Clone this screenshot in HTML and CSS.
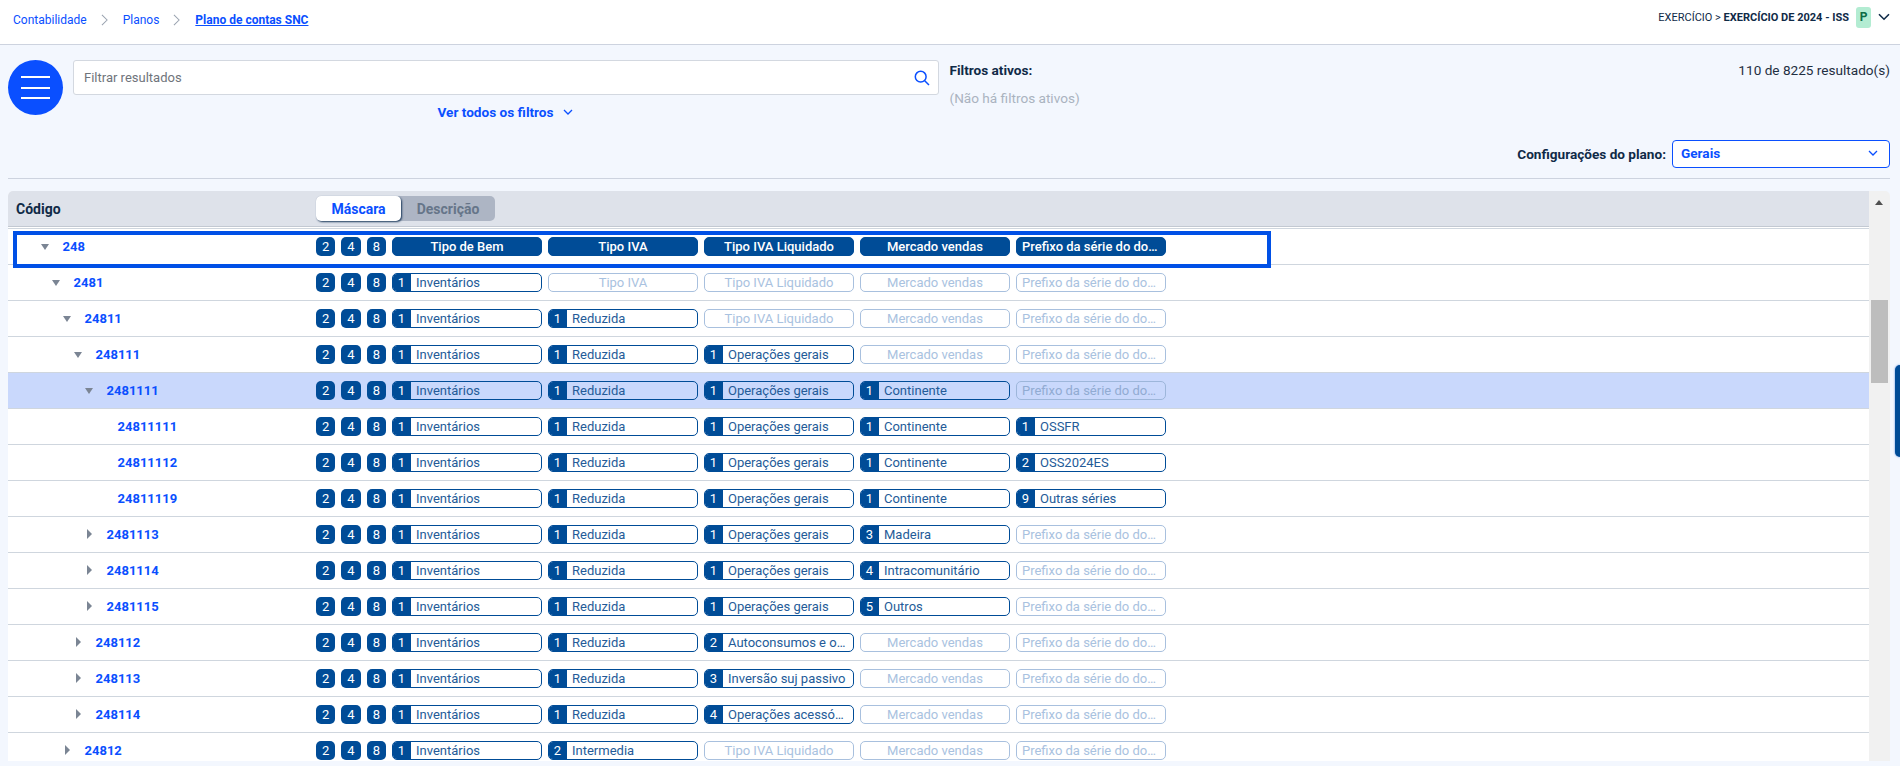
FILE: index.html
```html
<!DOCTYPE html>
<html lang="pt">
<head>
<meta charset="utf-8">
<title>Plano de contas SNC</title>
<link rel="stylesheet" href="styles.css">
</head>
<body>
<header class="topbar">
  <nav class="crumbs">
    <a class="crumb">Contabilidade</a>
    <svg class="crumb-sep" viewBox="0 0 8 14"><path d="M1 1l6 6-6 6"/></svg>
    <a class="crumb">Planos</a>
    <svg class="crumb-sep" viewBox="0 0 8 14"><path d="M1 1l6 6-6 6"/></svg>
    <a class="crumb current">Plano de contas SNC</a>
  </nav>
  <div class="exercise">
    <span>EXERCÍCIO &gt; <b>EXERCÍCIO DE 2024 - ISS</b></span>
    <span class="chip">P</span>
    <svg class="top-chev" viewBox="0 0 12 8"><path d="M1 1.2l5 5 5-5"/></svg>
  </div>
</header>

<section class="filters">
  <button class="menu"><i></i><i></i><i></i></button>
  <div class="search-col">
    <div class="search">
      <span class="placeholder">Filtrar resultados</span>
      <svg class="search-icon" viewBox="0 0 16 16"><circle cx="6.7" cy="6.7" r="5.4"/><path d="M10.7 10.7l4.3 4.3"/></svg>
    </div>
    <a class="see-all">Ver todos os filtros
      <svg class="see-chev" viewBox="0 0 10 6"><path d="M1 1l4 4 4-4"/></svg>
    </a>
  </div>
  <div class="active">
    <div class="active-title">Filtros ativos:</div>
    <div class="active-none">(Não há filtros ativos)</div>
  </div>
  <div class="results">110 de 8225 resultado(s)</div>
</section>

<section class="config">
  <label class="config-label">Configurações do plano:</label>
  <div class="select">Gerais
    <svg class="select-chev" viewBox="0 0 10 6"><path d="M1 1l4 4 4-4"/></svg>
  </div>
</section>

<main class="table">
  <div class="table-main">
    <div class="thead">
      <div class="code-cell head-code">Código</div>
      <div class="toggle"><span class="tog on">Máscara</span><span class="tog off">Descrição</span></div>
    </div>
    <div class="tbody">
      <div class="row">
        <div class="code-cell l0"><span class="tw open"></span><a class="code">248</a></div>
        <div class="mask">
          <span class="bit">2</span><span class="bit">4</span><span class="bit">8</span>
          <span class="field head">Tipo de Bem</span><span class="field head">Tipo IVA</span><span class="field head">Tipo IVA Liquidado</span><span class="field head">Mercado vendas</span><span class="field head long">Prefixo da série do do…</span>
        </div>
      </div>
      <div class="row">
        <div class="code-cell l1"><span class="tw open"></span><a class="code">2481</a></div>
        <div class="mask">
          <span class="bit">2</span><span class="bit">4</span><span class="bit">8</span>
          <span class="field"><b>1</b><em>Inventários</em></span><span class="field ph">Tipo IVA</span><span class="field ph">Tipo IVA Liquidado</span><span class="field ph">Mercado vendas</span><span class="field ph long">Prefixo da série do do…</span>
        </div>
      </div>
      <div class="row">
        <div class="code-cell l2"><span class="tw open"></span><a class="code">24811</a></div>
        <div class="mask">
          <span class="bit">2</span><span class="bit">4</span><span class="bit">8</span>
          <span class="field"><b>1</b><em>Inventários</em></span><span class="field"><b>1</b><em>Reduzida</em></span><span class="field ph">Tipo IVA Liquidado</span><span class="field ph">Mercado vendas</span><span class="field ph long">Prefixo da série do do…</span>
        </div>
      </div>
      <div class="row">
        <div class="code-cell l3"><span class="tw open"></span><a class="code">248111</a></div>
        <div class="mask">
          <span class="bit">2</span><span class="bit">4</span><span class="bit">8</span>
          <span class="field"><b>1</b><em>Inventários</em></span><span class="field"><b>1</b><em>Reduzida</em></span><span class="field"><b>1</b><em>Operações gerais</em></span><span class="field ph">Mercado vendas</span><span class="field ph long">Prefixo da série do do…</span>
        </div>
      </div>
      <div class="row selected">
        <div class="code-cell l4"><span class="tw open"></span><a class="code">2481111</a></div>
        <div class="mask">
          <span class="bit">2</span><span class="bit">4</span><span class="bit">8</span>
          <span class="field"><b>1</b><em>Inventários</em></span><span class="field"><b>1</b><em>Reduzida</em></span><span class="field"><b>1</b><em>Operações gerais</em></span><span class="field"><b>1</b><em>Continente</em></span><span class="field ph long">Prefixo da série do do…</span>
        </div>
      </div>
      <div class="row">
        <div class="code-cell l5"><span class="tw"></span><a class="code">24811111</a></div>
        <div class="mask">
          <span class="bit">2</span><span class="bit">4</span><span class="bit">8</span>
          <span class="field"><b>1</b><em>Inventários</em></span><span class="field"><b>1</b><em>Reduzida</em></span><span class="field"><b>1</b><em>Operações gerais</em></span><span class="field"><b>1</b><em>Continente</em></span><span class="field"><b>1</b><em>OSSFR</em></span>
        </div>
      </div>
      <div class="row">
        <div class="code-cell l5"><span class="tw"></span><a class="code">24811112</a></div>
        <div class="mask">
          <span class="bit">2</span><span class="bit">4</span><span class="bit">8</span>
          <span class="field"><b>1</b><em>Inventários</em></span><span class="field"><b>1</b><em>Reduzida</em></span><span class="field"><b>1</b><em>Operações gerais</em></span><span class="field"><b>1</b><em>Continente</em></span><span class="field"><b>2</b><em>OSS2024ES</em></span>
        </div>
      </div>
      <div class="row">
        <div class="code-cell l5"><span class="tw"></span><a class="code">24811119</a></div>
        <div class="mask">
          <span class="bit">2</span><span class="bit">4</span><span class="bit">8</span>
          <span class="field"><b>1</b><em>Inventários</em></span><span class="field"><b>1</b><em>Reduzida</em></span><span class="field"><b>1</b><em>Operações gerais</em></span><span class="field"><b>1</b><em>Continente</em></span><span class="field"><b>9</b><em>Outras séries</em></span>
        </div>
      </div>
      <div class="row">
        <div class="code-cell l4"><span class="tw closed"></span><a class="code">2481113</a></div>
        <div class="mask">
          <span class="bit">2</span><span class="bit">4</span><span class="bit">8</span>
          <span class="field"><b>1</b><em>Inventários</em></span><span class="field"><b>1</b><em>Reduzida</em></span><span class="field"><b>1</b><em>Operações gerais</em></span><span class="field"><b>3</b><em>Madeira</em></span><span class="field ph long">Prefixo da série do do…</span>
        </div>
      </div>
      <div class="row">
        <div class="code-cell l4"><span class="tw closed"></span><a class="code">2481114</a></div>
        <div class="mask">
          <span class="bit">2</span><span class="bit">4</span><span class="bit">8</span>
          <span class="field"><b>1</b><em>Inventários</em></span><span class="field"><b>1</b><em>Reduzida</em></span><span class="field"><b>1</b><em>Operações gerais</em></span><span class="field"><b>4</b><em>Intracomunitário</em></span><span class="field ph long">Prefixo da série do do…</span>
        </div>
      </div>
      <div class="row">
        <div class="code-cell l4"><span class="tw closed"></span><a class="code">2481115</a></div>
        <div class="mask">
          <span class="bit">2</span><span class="bit">4</span><span class="bit">8</span>
          <span class="field"><b>1</b><em>Inventários</em></span><span class="field"><b>1</b><em>Reduzida</em></span><span class="field"><b>1</b><em>Operações gerais</em></span><span class="field"><b>5</b><em>Outros</em></span><span class="field ph long">Prefixo da série do do…</span>
        </div>
      </div>
      <div class="row">
        <div class="code-cell l3"><span class="tw closed"></span><a class="code">248112</a></div>
        <div class="mask">
          <span class="bit">2</span><span class="bit">4</span><span class="bit">8</span>
          <span class="field"><b>1</b><em>Inventários</em></span><span class="field"><b>1</b><em>Reduzida</em></span><span class="field"><b>2</b><em>Autoconsumos e o…</em></span><span class="field ph">Mercado vendas</span><span class="field ph long">Prefixo da série do do…</span>
        </div>
      </div>
      <div class="row">
        <div class="code-cell l3"><span class="tw closed"></span><a class="code">248113</a></div>
        <div class="mask">
          <span class="bit">2</span><span class="bit">4</span><span class="bit">8</span>
          <span class="field"><b>1</b><em>Inventários</em></span><span class="field"><b>1</b><em>Reduzida</em></span><span class="field"><b>3</b><em>Inversão suj passivo</em></span><span class="field ph">Mercado vendas</span><span class="field ph long">Prefixo da série do do…</span>
        </div>
      </div>
      <div class="row">
        <div class="code-cell l3"><span class="tw closed"></span><a class="code">248114</a></div>
        <div class="mask">
          <span class="bit">2</span><span class="bit">4</span><span class="bit">8</span>
          <span class="field"><b>1</b><em>Inventários</em></span><span class="field"><b>1</b><em>Reduzida</em></span><span class="field"><b>4</b><em>Operações acessó…</em></span><span class="field ph">Mercado vendas</span><span class="field ph long">Prefixo da série do do…</span>
        </div>
      </div>
      <div class="row">
        <div class="code-cell l2"><span class="tw closed"></span><a class="code">24812</a></div>
        <div class="mask">
          <span class="bit">2</span><span class="bit">4</span><span class="bit">8</span>
          <span class="field"><b>1</b><em>Inventários</em></span><span class="field"><b>2</b><em>Intermedia</em></span><span class="field ph">Tipo IVA Liquidado</span><span class="field ph">Mercado vendas</span><span class="field ph long">Prefixo da série do do…</span>
        </div>
      </div>
    </div>
    <div class="focus-box"></div>
  </div>
  <div class="scrollbar">
    <span class="scroll-up"></span>
    <span class="scroll-thumb"></span>
  </div>
</main>
<div class="side-tab"></div>
</body>
</html>
```
FILE: styles.css
```css
* { box-sizing: border-box; }
html, body { margin: 0; height: 766px; overflow: hidden; }
body {
  background: #f3f7fe;
  font-family: Roboto, "Liberation Sans", sans-serif;
  font-size: 13px;
  color: #0f2a47;
  position: relative;
}
a { text-decoration: none; }
em { font-style: normal; }

.topbar {
  height: 45px;
  background: #fff;
  border-bottom: 1px solid #cdd3df;
  display: flex;
  align-items: flex-start;
  justify-content: space-between;
  padding: 0 10px 0 13px;
}
.crumbs { display: flex; align-items: center; height: 40px; font-size: 12px; }
.crumb { color: #0a4fff; }
.crumb.current { font-weight: 700; text-decoration: underline; }
.crumb-sep { width: 7px; height: 12px; margin: 0 15px 0 14px; fill: none; stroke: #9aa3b0; stroke-width: 1.2; }
.exercise { display: flex; align-items: center; height: 34px; font-size: 11px; color: #0f2a47; }
.exercise b { font-weight: 700; }
.chip {
  width: 15px; height: 21px; margin-left: 7px;
  background: #b3ecd2; color: #0c6b45; font-weight: 700; font-size: 12px;
  border-radius: 3px; display: flex; align-items: center; justify-content: center;
}
.top-chev { width: 12px; height: 8px; margin-left: 7px; fill: none; stroke: #0f2a47; stroke-width: 1.6; }

.filters {
  display: flex;
  height: 95px;
  padding: 15px 10px 0 8px;
  align-items: flex-start;
}
.menu {
  width: 55px; height: 55px; border: 0; padding: 0;
  border-radius: 50%; background: #0a4fff;
  display: flex; flex-direction: column; align-items: center; justify-content: center; gap: 8.5px;
  flex: none;
}
.menu i { display: block; width: 29px; height: 2px; background: #fff; }
.search-col { width: 866px; margin-left: 10px; display: flex; flex-direction: column; align-items: center; flex: none; }
.search {
  width: 100%; height: 35px; background: #fff;
  border: 1px solid #d3d8e0; border-radius: 3px;
  display: flex; align-items: center; justify-content: space-between;
  padding: 0 8px 0 10px;
}
.placeholder { color: #6f747b; font-size: 13px; }
.search-icon { width: 16px; height: 16px; fill: none; stroke: #0a4fff; stroke-width: 1.5; }
.see-all { display: flex; align-items: center; margin: 9px 2px 0 0; color: #0a4fff; font-weight: 700; font-size: 13.6px; line-height: 16px; }
.see-chev { width: 10px; height: 6px; margin-left: 9px; fill: none; stroke: #0a4fff; stroke-width: 1.3; }
.active { margin-left: 10.5px; }
.active-title { font-weight: 700; font-size: 13.6px; color: #0f2a47; line-height: 16px; margin-top: 2px; }
.active-none { font-size: 13.6px; color: #aab3c0; line-height: 16px; margin-top: 12px; }
.results { margin-left: auto; font-size: 13.6px; line-height: 16px; margin-top: 2px; color: #1f2f42; }

.config {
  display: flex; justify-content: flex-end; align-items: center;
  margin: 0 10px 0 8px; padding-bottom: 10px;
  height: 39px;
  border-bottom: 1px solid #cdd3df;
}
.config-label { font-weight: 700; font-size: 13.6px; color: #0f2a47; margin-right: 6px; }
.select {
  width: 218px; height: 28px; background: #fff;
  border: 1px solid #0a4fff; border-radius: 4px;
  display: flex; align-items: center; justify-content: space-between;
  padding: 0 11px 2px 8px;
  color: #0a4fff; font-weight: 700; font-size: 13.6px;
}
.select-chev { width: 10px; height: 6px; fill: none; stroke: #0a4fff; stroke-width: 1.3; }

.table {
  display: flex;
  margin: 12px 10px 0 8px;
  height: 570px;
  overflow: hidden;
  border-radius: 5px 5px 0 0;
}
.table-main { flex: 1; min-width: 0; position: relative; background: #fff; overflow: hidden; }
.thead {
  height: 36px; background: #dee2ea;
  border-bottom: 1px solid #c3c9d2;
  display: flex; align-items: center;
}
.code-cell { width: 308px; flex: none; display: flex; align-items: center; }
.head-code { padding-left: 8px; font-weight: 700; font-size: 14px; color: #0f2a47; }
.toggle { width: 179px; height: 25px; background: #adb5c4; border-radius: 5px; display: flex; }
.tog { display: flex; align-items: center; justify-content: center; font-weight: 700; font-size: 14px; }
.tog.on { width: 85px; background: #fff; color: #0a4fff; border-radius: 5px; box-shadow: 1px 1px 2px #1c3a5c; }
.tog.off { flex: 1; color: #667589; }

.tbody { border-top: 1px solid #cfd6de; margin-top: 1px; }
.row {
  height: 36px;
  border-bottom: 1px solid #cfd6de;
  display: flex; align-items: center;
  padding-bottom: 1px;
}
.row.selected { background: #c9d8fc; }
.l0 { padding-left: 33px; }
.l1 { padding-left: 44px; }
.l2 { padding-left: 55px; }
.l3 { padding-left: 66px; }
.l4 { padding-left: 77px; }
.l5 { padding-left: 88px; }
.tw { width: 21.5px; height: 10px; flex: none; display: block; position: relative; }
.tw.open::before {
  content: ""; position: absolute; left: 0; top: 3px;
  border-style: solid; border-width: 6px 4.5px 0; border-color: #7b8594 transparent transparent;
}
.tw.closed::before {
  content: ""; position: absolute; left: 2px; top: 0;
  border-style: solid; border-width: 5px 0 5px 5.5px; border-color: transparent transparent transparent #7b8594;
}
.code { color: #0a4fff; font-weight: 700; font-size: 13px; }
.mask { display: flex; align-items: center; gap: 6px; }
.bit {
  width: 19.33px; height: 19px; background: #004c97; color: #fff;
  border-radius: 5px; display: flex; align-items: center; justify-content: center;
  font-size: 13px; font-weight: 400; flex: none;
}
.field {
  width: 150px; height: 19px; border: 1px solid #004c97; border-radius: 5px;
  display: flex; align-items: center; flex: none;
  overflow: hidden; color: #245b98;
  font-size: 13px;
}
.field b { width: 19px; height: 19px; background: #004c97; color: #fff; font-weight: 400; display: flex; align-items: center; justify-content: center; flex: none; margin-left: -1px; }
.field em { padding-left: 5px; white-space: nowrap; flex: 1; min-width: 0; }
.field.head, .field.ph { display: block; line-height: 17px; text-align: center; white-space: nowrap; padding: 0 5px; }
.field.long { text-align: left; }
.field.head { background: #004c97; color: #fff; font-weight: 500; }
.field.ph { border-color: #a8c0de; color: #a9c2e0; }
.selected .field.ph { border-color: #9db6da; color: #91abd2; }

.focus-box {
  position: absolute; left: 5px; top: 40px;
  width: 1258px; height: 37px;
  border: 4px solid #0050e6;
}
.scrollbar { width: 21px; flex: none; background: #f1f1f1; position: relative; }
.scroll-up {
  position: absolute; left: 6px; top: 9px;
  border-style: solid; border-width: 0 4.5px 5px; border-color: transparent transparent #505050;
}
.scroll-thumb { position: absolute; left: 2px; top: 109px; width: 17px; height: 83px; background: #bdbdbd; }
.side-tab {
  position: absolute; right: 0; top: 365px; width: 5px; height: 92px;
  background: #004c97; border-radius: 6px 0 0 6px; box-shadow: 0 0 2px #3f7fe0;
}
```
